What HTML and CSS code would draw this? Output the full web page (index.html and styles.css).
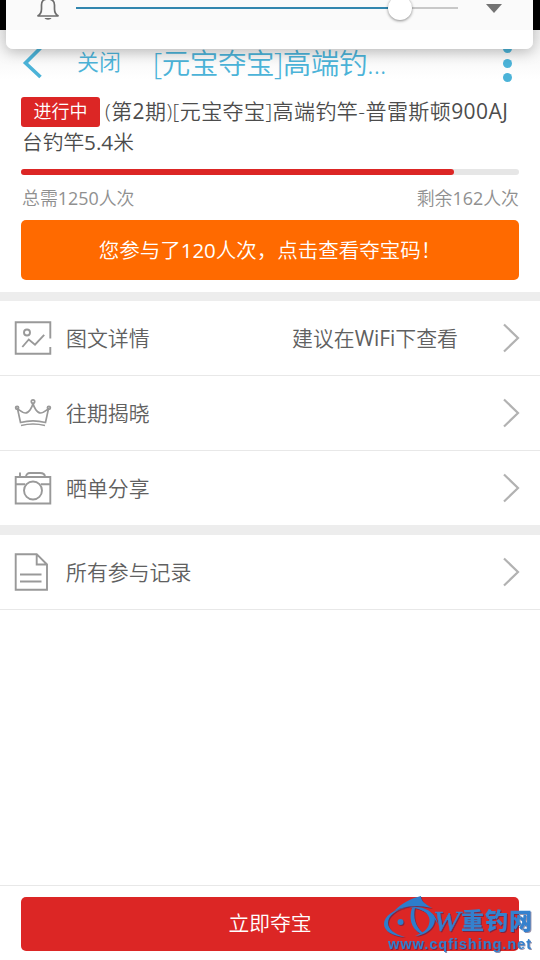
FILE: index.html
```html
<!DOCTYPE html>
<html lang="zh-CN">
<head>
<meta charset="utf-8">
<title>元宝夺宝</title>
<link rel="stylesheet" href="styles.css">
</head>
<body>
<div class="screen">
  <div class="statusbar"></div>
  <header class="navbar">
    <svg class="back" width="22" height="34" viewBox="0 0 22 34"><path d="M20.500 2 5.500 17l15 14" fill="none" stroke="#4bb3d8" stroke-width="3.600"/></svg>
    <span class="close">关闭</span>
    <h1 class="nav-title">[元宝夺宝]高端钓...</h1>
    <div class="more"><i></i><i></i><i></i></div>
  </header>
  <section class="summary">
    <div class="product"><span class="badge">进行中</span><span class="product-line">(第<b>2</b>期)[元宝夺宝]高端钓竿-普雷斯顿<b>900AJ</b></span></div>
    <div class="product second">台钓竿<b>5.4</b>米</div>
    <div class="progress"><div class="progress-fill"></div></div>
    <div class="counts"><span>总需<b>1250</b>人次</span><span>剩余<b>162</b>人次</span></div>
    <div class="joined">您参与了<b>120</b>人次，点击查看夺宝码！</div>
  </section>
  <nav class="list">
    <div class="row">
      <svg class="icon" viewBox="0 0 38 38"><path d="M36.300 19.500V3.300H1.700v31.400h34.600V28"/><circle cx="13" cy="13.500" r="3"/><path d="m8.300 28 6.500-7.500 6.200 5.200 9.200-9.800"/></svg>
      <span class="label">图文详情</span><span class="note">建议在<b>WiFi</b>下查看</span>
      <svg class="arrow" viewBox="0 0 20 30"><path d="m3 1.500 14 13.500L3 28.500"/></svg>
    </div>
    <div class="row">
      <svg class="icon thin" viewBox="0 0 38 38"><circle cx="19" cy="7.500" r="1.700"/><circle cx="3.100" cy="13.800" r="1.500"/><circle cx="34.900" cy="13.800" r="1.500"/><path d="M19 9.500c-1 4-4 9.500-7.500 9.500-3 0-5-2.200-8-4.300L6.500 28.500c8-2 17-2 25 0l3-13.800c-3 2.100-5 4.300-8 4.300-3.500 0-6.500-5.500-7.500-9.500ZM7 31.500c8-2 16-2 24 0"/></svg>
      <span class="label">往期揭晓</span>
      <svg class="arrow" viewBox="0 0 20 30"><path d="m3 1.500 14 13.500L3 28.500"/></svg>
    </div>
    <div class="row last">
      <svg class="icon" viewBox="0 0 38 38"><path d="M1.700 8h34.600v26.500H1.700ZM1.700 15.300h9.500m15.600 0h9.500M6 3.500V8M12 8c0-2.500 1.500-4 4-4h10c3 0 5 1.500 5 4"/><circle cx="19" cy="21.500" r="9"/></svg>
      <span class="label">晒单分享</span>
      <svg class="arrow" viewBox="0 0 20 30"><path d="m3 1.500 14 13.500L3 28.500"/></svg>
    </div>
    <div class="row records">
      <svg class="icon" viewBox="0 0 38 38"><path d="M1.700 1.200h21L33 11.500v25.300H1.700ZM22.700 1.200v10.300H33M6 21.500h21.500M6 28.500h21.500"/></svg>
      <span class="label">所有参与记录</span>
      <svg class="arrow" viewBox="0 0 20 30"><path d="m3 1.500 14 13.500L3 28.500"/></svg>
    </div>
  </nav>
  <footer class="footer"><div class="buy">立即夺宝</div></footer>

  <div class="volume">
    <svg class="bell" width="24" height="22" viewBox="0 0 24 22"><path d="M1.500 16h21c-3-1.500-4-3.500-4-7V5c0-4-2.500-6-6.500-6S5.500 1 5.500 5v4c0 3.500-1 5.500-4 7Z" fill="none" stroke="#6e6e6e" stroke-width="1.700"/><path d="M8.500 18h7c-1 2.300-6 2.300-7 0Z" fill="#6e6e6e"/></svg>
    <div class="track"><div class="track-fill"></div><div class="knob"></div></div>
    <svg class="caret" width="16" height="9" viewBox="0 0 16 9"><path d="M0 0h16L8 9Z" fill="#737373"/></svg>
  </div>

  <svg class="watermark" width="156" height="64" viewBox="0 0 156 64">
    <g fill="#2d7dcc">
      <path d="M10 15C18 7 28 2 37 0c0 4 2 7 11 12-14-3-25-3-38 3Z"/>
      <path d="M25 11C8 13 0 21 0 28c0 7 8 12 21 13C10 38 4 33 4 27c0-7 8-14 21-16Z"/>
      <circle cx="16.500" cy="26" r="3"/>
      <path d="M25 11c12-1 25 2 29 17-5-9-14-15-29-17Z"/>
      <path d="M31 12c-2 9 0 18 8 25l-2 1c-11-6-12-17-9-26Z"/>
      <path d="M35 13c14 1 19 9 14 17-3 5-9 9-18 10 8-3 13-7 14-12 2-6-1-12-10-15Z"/>
    </g>
    <text class="wm-w" x="49" y="35" textLength="27" lengthAdjust="spacingAndGlyphs">W</text>
    <text class="wm-name" x="77" y="33" textLength="71">重钓网</text>
    <text class="wm-url" x="4" y="53" textLength="143">www.cqfishing.net</text>
  </svg>
</div>
</body>
</html>
```
FILE: styles.css
```css
* { box-sizing: border-box; }
body { margin: 0; background: #fff; }
.screen {
  position: relative; width: 540px; height: 960px; overflow: hidden;
  display: flex; flex-direction: column;
  font-family: "Open Sans", "Noto Sans CJK SC", sans-serif;
  font-weight: 350; color: #606060; background: #fff;
}
b { font-weight: 400; }
.statusbar { height: 30px; background: #000; }
.navbar {
  height: 66px; display: flex; align-items: center; color: #4bb3d8;
  padding: 0 28px 0 20px; white-space: nowrap;
  background: linear-gradient(#f0f0f0, #fff 75%);
}
.back { flex: none; margin-right: 35px; }
.close { width: 76px; font-size: 22px; line-height: 32px; margin-top: -4px; }
.nav-title { margin: 0; font-size: 28.5px; line-height: 40px; font-weight: 350; letter-spacing: -.4px; }
.more { margin-left: auto; display: flex; flex-direction: column; gap: 5.5px; }
.more i { width: 9px; height: 9px; border-radius: 50%; background: #4bb3d8; }

.summary { height: 196px; padding: 0 21px; flex: none; }
.product {
  height: 31px; display: flex; align-items: center; white-space: nowrap;
  font-size: 20.7px; line-height: 31px; color: #4c4c4c;
}
.product.second { padding-left: 1px; }
.product-line { font-size: 21px; letter-spacing: .43px; }
.badge {
  width: 79px; height: 30px; margin-right: 5px; border-radius: 3px; background: #dc2625;
  color: #fff; font-size: 18px; line-height: 29px; text-align: center;
}
.progress { height: 6px; margin-top: 11px; border-radius: 3px; background: #e6e6e6; }
.progress-fill { width: 433px; height: 6px; border-radius: 3px; background: #dc2625; }
.counts {
  height: 45px; padding: 10px 0 0 1px; display: flex; justify-content: space-between;
  font-size: 17.9px; line-height: 26px; color: #909090;
}
.joined {
  height: 60px; border-radius: 5px; background: #ff6a00; color: #fff;
  font-size: 20.5px; line-height: 60px; text-align: center; white-space: nowrap;
}

.list { border-top: 9px solid #ededed; }
.row {
  height: 75px; padding: 0 19px 0 14px; display: flex; align-items: center;
  border-bottom: 1px solid #e8e8e8; font-size: 20.9px; line-height: 30px; color: #606060;
}
.row.last { height: 84px; border-bottom: 10px solid #ededed; }
.icon { width: 38px; height: 38px; margin-right: 14px; fill: none; stroke: #999; stroke-width: 1.9; }
.icon.thin { stroke-width: 1.7; }
.arrow { width: 20px; height: 30px; margin-left: auto; fill: none; stroke: #b2b2b2; stroke-width: 2.2; }
.note { margin-left: auto; }
.note + .arrow { margin-left: 43px; }

.footer { height: 75px; margin-top: auto; padding: 11px 21px 0; border-top: 1px solid #e8e8e8; }
.buy {
  height: 54px; border-radius: 5px; background: #dc2625; color: #fff;
  font-size: 20.8px; line-height: 53px; text-align: center;
}

.volume {
  position: absolute; left: 6px; top: 0; width: 527px; height: 49px;
  display: flex; align-items: flex-start; padding-left: 30px;
  background: linear-gradient(#fafafa 30px, #fff 30px);
  border-radius: 0 0 7px 7px; box-shadow: 0 3px 14px rgba(0, 0, 0, .25);
}
.bell { flex: none; margin-right: 16px; }
.track { position: relative; width: 382px; height: 2px; margin-top: 7px; background: #c8c8c8; }
.track-fill { width: 324px; height: 2px; background: #3286ae; }
.knob {
  position: absolute; left: 312px; top: -11px; width: 24px; height: 24px;
  border-radius: 50%; background: #fff; box-shadow: 0 1px 3px rgba(0, 0, 0, .45);
}
.caret { margin: 4px 0 0 28px; }

.watermark { position: absolute; left: 384px; top: 896px; filter: drop-shadow(1px 1px 0 rgba(40, 35, 90, .5)); }
.watermark text { fill: #3481ce; }
.wm-w { font: italic 30px "Liberation Serif", serif; stroke: #3481ce; stroke-width: .4; }
.wm-name { font: 900 23px "Noto Sans CJK SC", sans-serif; }
.wm-url { font: bold 14.5px "Liberation Sans", sans-serif; }
```
